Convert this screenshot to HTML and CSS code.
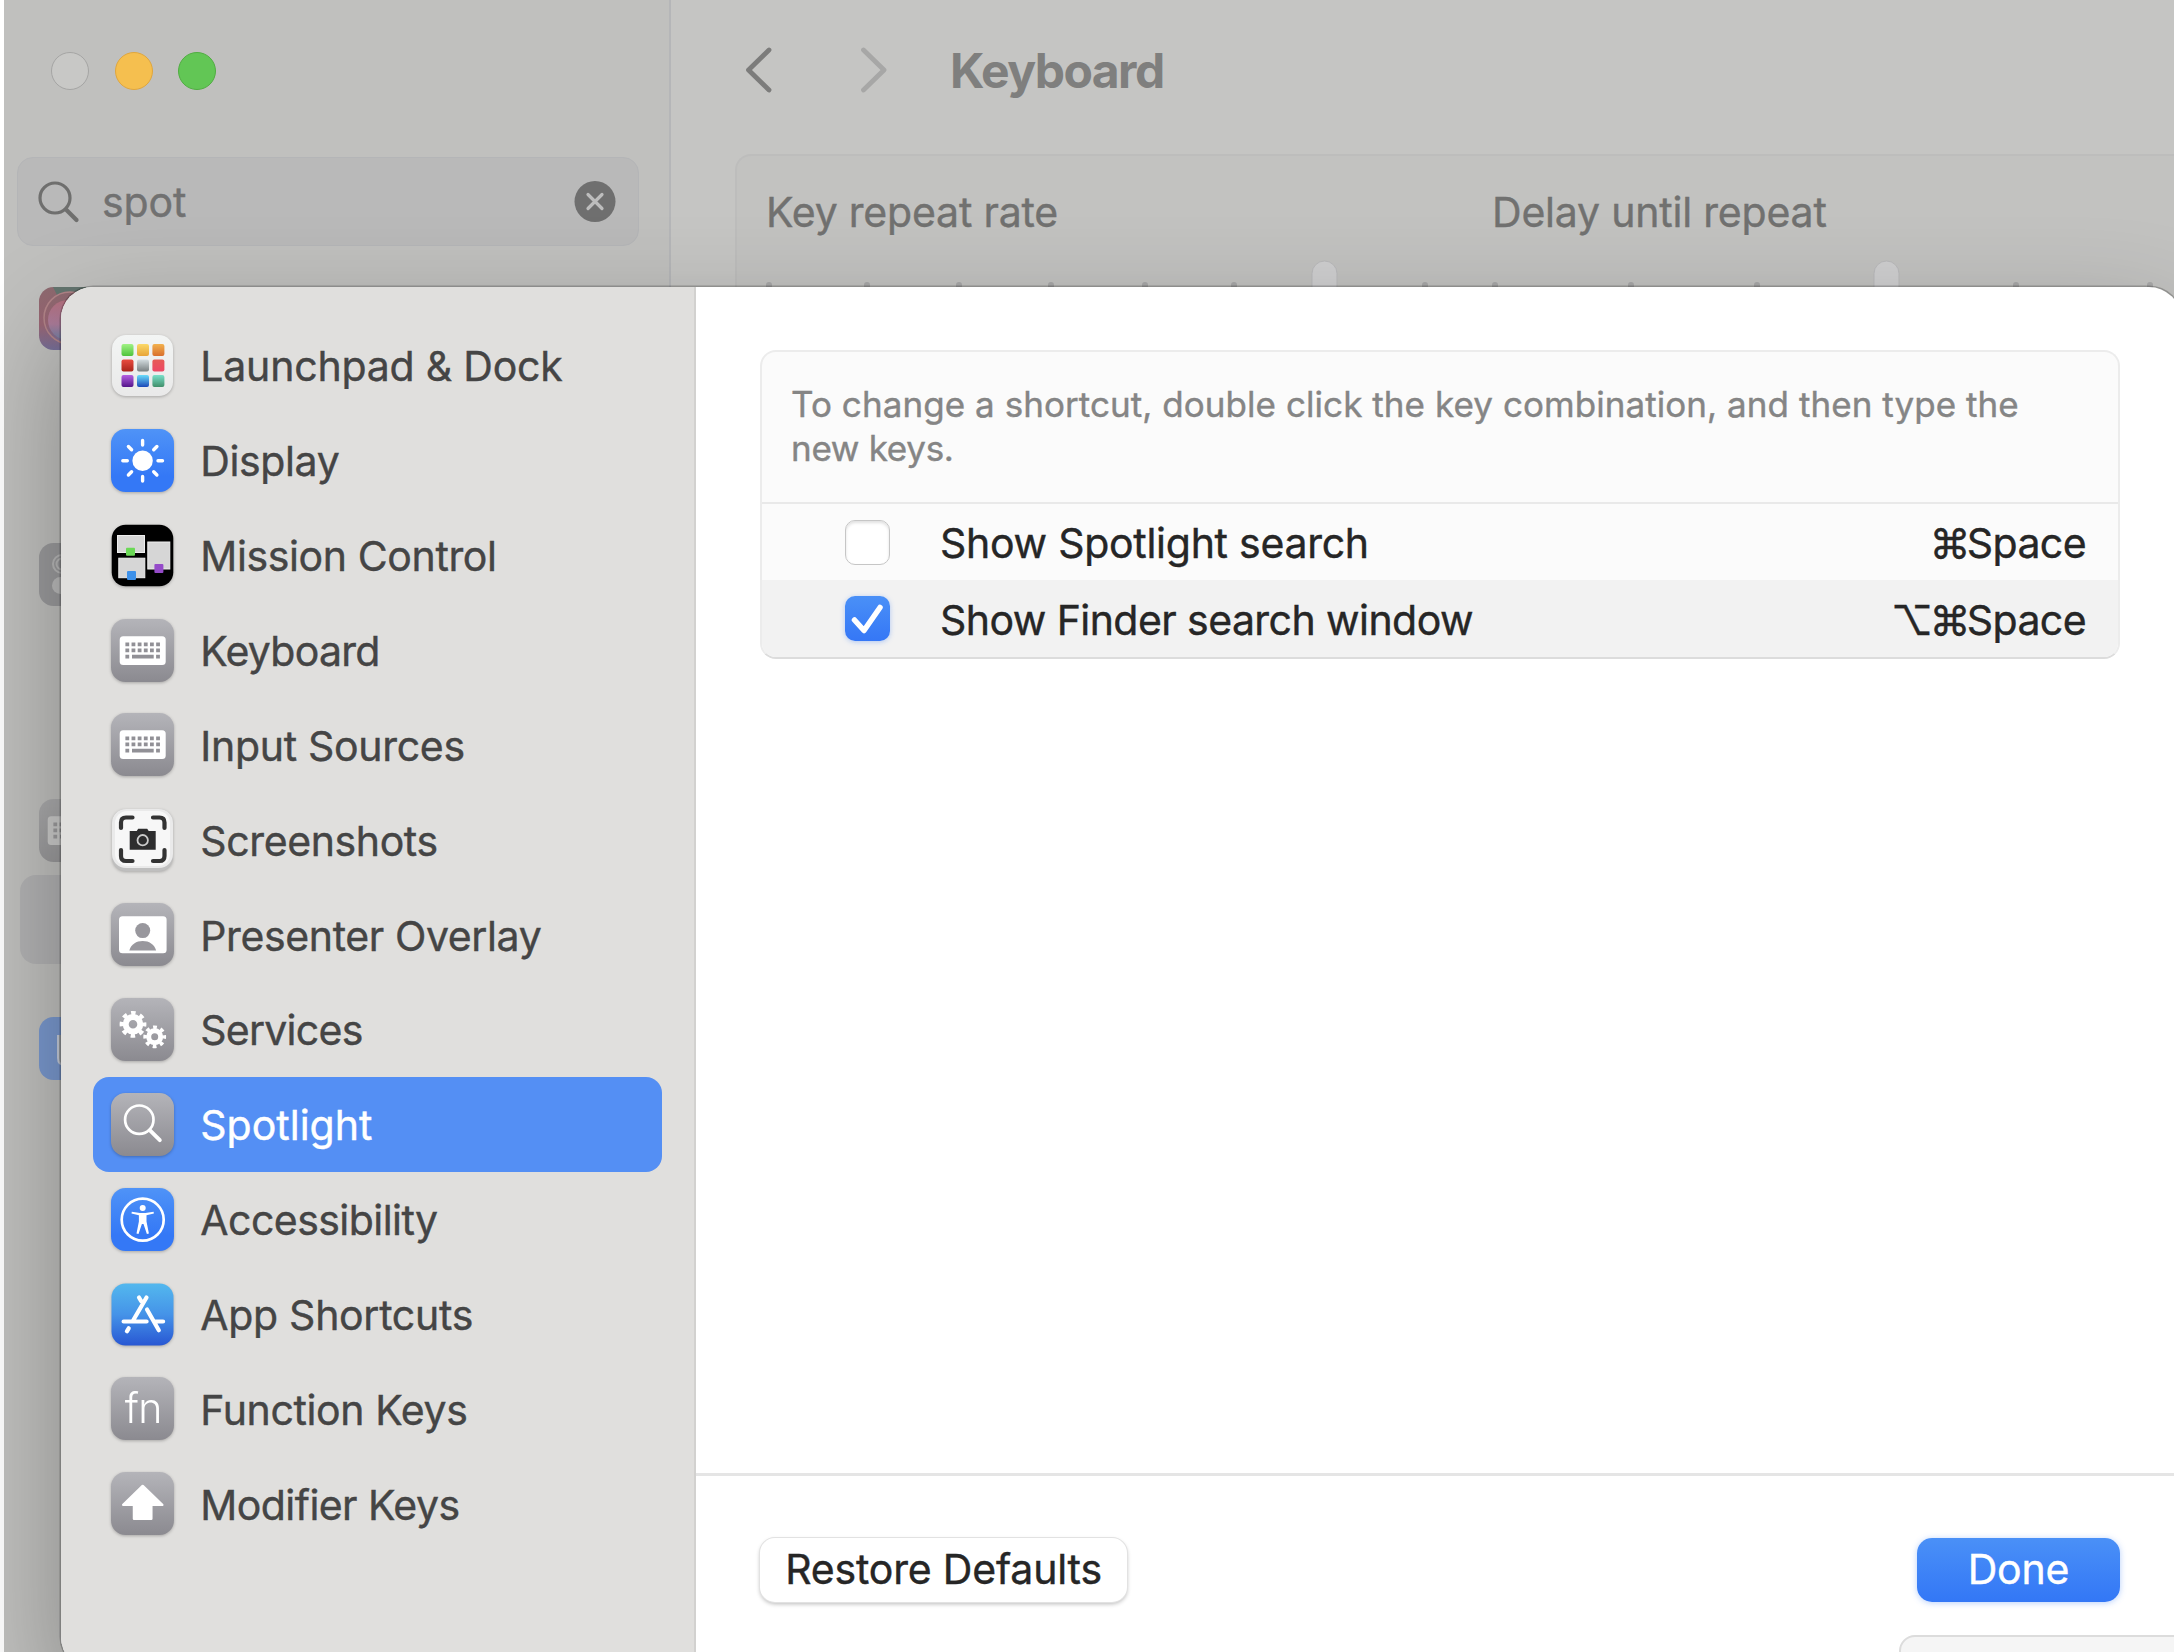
FILE: index.html
```html
<!DOCTYPE html>
<html lang="en">
<head>
<meta charset="utf-8">
<title>Keyboard Shortcuts</title>
<link rel="stylesheet" href="styles.css">
</head>
<body>
<svg class="defs" width="0" height="0" aria-hidden="true">
  <defs>
    <linearGradient id="gray" x1="0" y1="0" x2="0" y2="1"><stop offset="0" stop-color="#b4b4b9"/><stop offset="1" stop-color="#8b8a90"/></linearGradient>
    <linearGradient id="blue" x1="0" y1="0" x2="0" y2="1"><stop offset="0" stop-color="#4f93f7"/><stop offset=".75" stop-color="#3478f6"/></linearGradient>
    <linearGradient id="white" x1="0" y1="0" x2="0" y2="1"><stop offset="0" stop-color="#f3f5f4"/><stop offset="1" stop-color="#e9e9e9"/></linearGradient>
    <linearGradient id="store" x1="0" y1="0" x2="0" y2="1"><stop offset="0" stop-color="#53b8ee"/><stop offset=".5" stop-color="#4593e8"/><stop offset="1" stop-color="#2857d3"/></linearGradient>
    <linearGradient id="siri" x1="0" y1="0" x2="0" y2="1"><stop offset="0" stop-color="#8e6a70"/><stop offset=".6" stop-color="#9a6674"/><stop offset="1" stop-color="#77709a"/></linearGradient>
    <linearGradient id="orb" x1="0" y1="0" x2="0" y2="1"><stop offset="0" stop-color="#b4707f"/><stop offset=".6" stop-color="#ac7c9a"/><stop offset="1" stop-color="#7180a4"/></linearGradient>
    <linearGradient id="p1" x1="0" y1="0" x2="0" y2="1"><stop offset="0" stop-color="#a0f284"/><stop offset="1" stop-color="#4fc33c"/></linearGradient>
    <linearGradient id="p2" x1="0" y1="0" x2="0" y2="1"><stop offset="0" stop-color="#fbd968"/><stop offset="1" stop-color="#e8a437"/></linearGradient>
    <linearGradient id="p3" x1="0" y1="0" x2="0" y2="1"><stop offset="0" stop-color="#f2b14d"/><stop offset="1" stop-color="#d96f2d"/></linearGradient>
    <linearGradient id="p4" x1="0" y1="0" x2="0" y2="1"><stop offset="0" stop-color="#e94c40"/><stop offset="1" stop-color="#aa241b"/></linearGradient>
    <linearGradient id="p5" x1="0" y1="0" x2="0" y2="1"><stop offset="0" stop-color="#d3dcdf"/><stop offset="1" stop-color="#798081"/></linearGradient>
    <linearGradient id="p6" x1="0" y1="0" x2="0" y2="1"><stop offset="0" stop-color="#e65a55"/><stop offset="1" stop-color="#ed4765"/></linearGradient>
    <linearGradient id="p7" x1="0" y1="0" x2="0" y2="1"><stop offset="0" stop-color="#b560e2"/><stop offset="1" stop-color="#54158a"/></linearGradient>
    <linearGradient id="p8" x1="0" y1="0" x2="0" y2="1"><stop offset="0" stop-color="#69dcfa"/><stop offset="1" stop-color="#1c48b8"/></linearGradient>
    <linearGradient id="p9" x1="0" y1="0" x2="0" y2="1"><stop offset="0" stop-color="#79dfc9"/><stop offset="1" stop-color="#418f6a"/></linearGradient>
    <symbol id="kbd" viewBox="0 0 63 63">
      <rect width="63" height="63" rx="14.5" fill="url(#gray)"/>
      <rect x="8.7" y="17.3" width="46" height="28.6" rx="3.5" fill="#fff"/>
      <path d="M14.4 25.4h35M14.4 31.4h35" stroke="#919096" stroke-width="3.8" stroke-dasharray="3.8 2.35"/>
      <path d="M14.4 37.7h3.8M21 37.7h21.7M45.1 37.7h3.8" stroke="#919096" stroke-width="3.8"/>
    </symbol>
  </defs>
</svg>

<div class="window">
  <aside class="sidebar">
    <div class="lights"><i class="light off"></i><i class="light yellow"></i><i class="light green"></i></div>
    <div class="search">
      <svg width="42" height="42" viewBox="0 0 42 42" fill="none" stroke="#6f6f6e" stroke-linecap="round"><circle cx="17" cy="17" r="15" stroke-width="3.2"/><path d="M28 28.500L38.500 39" stroke-width="4.200"/></svg>
      <span class="query">spot</span>
      <svg width="42" height="42" viewBox="0 0 42 42"><circle cx="21" cy="20.500" r="20.500" fill="#6f6f6f"/><path d="M14 13.500l14 14M28 13.500L14 27.500" stroke="#bdbdbd" stroke-width="3.200" stroke-linecap="round"/></svg>
    </div>
    <div class="results">
      <svg class="r1" width="63" height="63" viewBox="0 0 63 63"><rect width="63" height="63" rx="14.500" fill="url(#siri)"/><path d="M14 0h49v30H30L18 8z" fill="#64756f"/><circle cx="31" cy="31" r="26" fill="url(#siri)" stroke="#b28488" stroke-width="1.500"/><circle cx="29" cy="33" r="20" fill="url(#orb)"/></svg>
      <svg class="r2" width="63" height="63" viewBox="0 0 63 63"><rect width="63" height="63" rx="14.500" fill="#9b9b9d"/><rect x="14" y="12" width="42" height="18" rx="9" fill="none" stroke="#b9b9b9" stroke-width="2"/><circle cx="23" cy="21" r="5.500" fill="none" stroke="#b9b9b9" stroke-width="2"/><rect x="13" y="34" width="44" height="17" rx="8.500" fill="#bcbcbc"/></svg>
      <svg class="r3" width="63" height="63"><use href="#kbd"/></svg>
      <div class="r4"></div>
      <svg class="r5" width="63" height="63" viewBox="0 0 63 63"><rect width="63" height="63" rx="14.500" fill="#7a99cf"/><path d="M19 18v23q0 7 7 7h20V18" fill="#a5aaaf" stroke="#c6cddb" stroke-width="2"/></svg>
    </div>
  </aside>
  <main class="content">
    <header class="toolbar">
      <svg width="28" height="48" viewBox="0 0 28 48" fill="none" stroke="#7c7c7b" stroke-width="4.800" stroke-linecap="round" stroke-linejoin="round"><path d="M25 4L4.500 24l20.500 20"/></svg>
      <svg width="28" height="48" viewBox="0 0 28 48" fill="none" stroke="#a7a7a6" stroke-width="4.800" stroke-linecap="round" stroke-linejoin="round"><path d="M4.500 4L25 24L4.500 44"/></svg>
      <h1>Keyboard</h1>
    </header>
    <section class="rates">
      <div class="rate first"><span>Key repeat rate</span>
        <svg width="670" height="28" viewBox="0 0 670 28"><path d="M3 25v6M101 25v6M193 25v6M285 25v6M379 25v6M468 25v6M659 25v6" stroke="#a8a8a8" stroke-width="6" stroke-linecap="round"/><rect x="546" y="1" width="25" height="60" rx="12.500" fill="#cfcfd0" stroke="#b9b9bb"/></svg>
      </div>
      <div class="rate"><span>Delay until repeat</span>
        <svg width="680" height="28" viewBox="0 0 680 28"><path d="M3 25v6M139 25v6M265 25v6M524 25v6M658 25v6" stroke="#a8a8a8" stroke-width="6" stroke-linecap="round"/><rect x="382" y="1" width="25" height="60" rx="12.500" fill="#cfcfd0" stroke="#b9b9bb"/></svg>
      </div>
    </section>
  </main>
</div>

<div class="sheet">
  <nav class="menu">
    <a class="item wide"><svg class="icon" viewBox="0 0 63 63"><rect x="1" y="1" width="61" height="61" rx="14" fill="url(#white)"/>
      <rect x="10.500" y="10" width="12" height="12" rx="2" fill="url(#p1)"/><rect x="26" y="10" width="12" height="12" rx="2" fill="url(#p2)"/><rect x="41.400" y="10" width="12" height="12" rx="2" fill="url(#p3)"/>
      <rect x="10.500" y="25.500" width="12" height="12" rx="2" fill="url(#p4)"/><rect x="26" y="25.500" width="12" height="12" rx="2" fill="url(#p5)"/><rect x="41.400" y="25.500" width="12" height="12" rx="2" fill="url(#p6)"/>
      <rect x="10.500" y="41" width="12" height="12" rx="2" fill="url(#p7)"/><rect x="26" y="41" width="12" height="12" rx="2" fill="url(#p8)"/><rect x="41.400" y="41" width="12" height="12" rx="2" fill="url(#p9)"/></svg><span>Launchpad &amp; Dock</span></a>
    <a class="item snug"><svg class="icon" viewBox="0 0 63 63"><rect width="63" height="63" rx="14.500" fill="url(#blue)"/><circle cx="31.600" cy="31.700" r="10.200" fill="#fff"/><path d="M31.600 11.500v4.500M31.600 47.500V52M11.800 31.700h4.500M47 31.700h4.500M17.400 17.500l3.200 3.200M42.700 42.800l3.200 3.200M45.900 17.500l-3.200 3.200M20.600 42.800L17.400 46" stroke="#fff" stroke-width="3.400" stroke-linecap="round"/></svg><span>Display</span></a>
    <a class="item snug"><svg class="icon" viewBox="0 0 63 63"><rect x=".700" y=".700" width="61.600" height="61.600" rx="14" fill="#000"/><g fill="#d6d6d6" stroke="#eee"><rect x="6.500" y="11.500" width="27" height="17"/><rect x="36.800" y="18" width="22" height="27"/><rect x="7.800" y="34.200" width="26" height="19.500"/></g><rect x="15" y="23.700" width="9" height="8" rx="1" fill="#6bd956"/><rect x="43.400" y="40" width="9" height="9" rx="1" fill="#954bc9"/><rect x="16" y="47" width="9" height="9" rx="1" fill="#3d91ea"/></svg><span>Mission Control</span></a>
    <a class="item tightest"><svg class="icon"><use href="#kbd"/></svg><span>Keyboard</span></a>
    <a class="item"><svg class="icon"><use href="#kbd"/></svg><span>Input Sources</span></a>
    <a class="item snug"><svg class="icon" viewBox="0 0 63 63"><rect x="1" y="1" width="61" height="62" rx="14" fill="#bfbfbf"/><rect x="1" y="1" width="61" height="59" rx="14" fill="#eaeaea"/><rect x="4" y="3" width="55" height="55" rx="12" fill="#f7f7f7"/><path d="M10 20v-5.500q0-5 5-5h6.500M42 9.500h6.500q5 0 5 5V20M53.500 42v6q0 5-5 5H42M21.500 53H15q-5 0-5-5v-6" fill="none" stroke="#333" stroke-width="4.200" stroke-linecap="round"/><path d="M18.700 23h7l1.500-2.300h9L37.700 23h7v18.700h-26z" fill="#2d2d2e"/><circle cx="31.700" cy="32.200" r="5.200" fill="#2d2d2e" stroke="#ccc" stroke-width="1.800"/></svg><span>Screenshots</span></a>
    <a class="item snug"><svg class="icon" viewBox="0 0 63 63"><rect width="63" height="63" rx="14.500" fill="url(#gray)"/><rect x="8" y="13.300" width="47.600" height="37" rx="3.500" fill="#fff"/><circle cx="31.700" cy="27.600" r="7.500" fill="#98979d"/><path d="M18.300 47.400c1.800-6 7-9.300 13.400-9.300s11.600 3.300 13.400 9.300z" fill="#98979d"/></svg><span>Presenter Overlay</span></a>
    <a class="item tightest"><svg class="icon" viewBox="0 0 63 63"><rect width="63" height="63" rx="14.500" fill="url(#gray)"/><g fill="none" stroke="#fff"><circle cx="22" cy="26.300" r="7.300" stroke-width="6"/><circle cx="22" cy="26.300" r="11.400" stroke-width="4" stroke-dasharray="4.500 4.453" stroke-dashoffset="2.250"/><circle cx="43.700" cy="38.800" r="6" stroke-width="5"/><circle cx="43.700" cy="38.800" r="9.600" stroke-width="3.600" stroke-dasharray="3.800 3.740" stroke-dashoffset="1.900"/></g></svg><span>Services</span></a>
    <a class="item wide selected"><svg class="icon" viewBox="0 0 63 63"><rect width="63" height="63" rx="14.500" fill="url(#gray)"/><circle cx="28.300" cy="26.700" r="14.200" fill="none" stroke="#fff" stroke-width="2.700"/><path d="M39 37.400l9.800 9.800" stroke="#fff" stroke-width="3.900" stroke-linecap="round"/></svg><span>Spotlight</span></a>
    <a class="item tight"><svg class="icon" viewBox="0 0 63 63"><rect width="63" height="63" rx="14.500" fill="url(#blue)"/><circle cx="31.700" cy="31.700" r="21" fill="none" stroke="#fff" stroke-width="2.700"/><circle cx="31.700" cy="20" r="3" fill="#fff"/><path d="M20.800 23.700L29 25h5.400l8.200-1.300.3 1.900-7.400 1.600v6.300l2.400 12-2 .4-3.400-10h-1.600l-3.400 10-2-.4 2.400-12v-6.300l-7.400-1.600z" fill="#fff"/></svg><span>Accessibility</span></a>
    <a class="item"><svg class="icon" viewBox="0 0 63 63"><rect x=".500" y=".500" width="62" height="62" rx="14" fill="url(#store)"/><path d="M35.500 14.500L21.800 38M28 14.500l2.200 3.700M36 26.500l11.800 20.700M12.600 38.500h23M44.500 38.500h7.600M17.700 45.300l-1.800 3" fill="none" stroke="#fff" stroke-width="4.200" stroke-linecap="round"/></svg><span>App Shortcuts</span></a>
    <a class="item snug"><svg class="icon" viewBox="0 0 63 63"><rect width="63" height="63" rx="14.500" fill="url(#gray)"/><text x="32.300" y="45.800" class="fn">fn</text></svg><span>Function Keys</span></a>
    <a class="item tight"><svg class="icon" viewBox="0 0 63 63"><rect width="63" height="63" rx="14.500" fill="url(#gray)"/><path d="M31.700 14L51.300 32.800H40.300V46.700H23V32.800H12.200z" fill="#fff" stroke="#fff" stroke-width="2.500" stroke-linejoin="round"/></svg><span>Modifier Keys</span></a>
  </nav>
  <section class="pane">
    <div class="group">
      <p class="help">To change a shortcut, double click the key combination, and then type the<br><span class="help2">new keys.</span></p>
      <div class="row"><i class="check"></i><span class="name n1">Show Spotlight search</span><span class="keys"><span class="mod">⌘</span>Space</span></div>
      <div class="row alt"><i class="check on"><svg width="45" height="45" viewBox="0 0 45 45"><path d="M9.500 24L19 34.500L35 11.500" fill="none" stroke="#fff" stroke-width="5.500" stroke-linecap="round" stroke-linejoin="round"/></svg></i><span class="name n2">Show Finder search window</span><span class="keys"><span class="mod">⌥⌘</span>Space</span></div>
    </div>
    <footer class="actions">
      <button class="btn restore">Restore Defaults</button>
      <button class="btn done">Done</button>
    </footer>
  </section>
</div>
<div class="corner"></div>
</body>
</html>
```

FILE: styles.css
```css
* { box-sizing: border-box; }
body {
  margin: 0;
  width: 2174px;
  height: 1652px;
  overflow: hidden;
  position: relative;
  background: #fff;
  font-family: Inter, "Liberation Sans", sans-serif;
  font-size: 41px;
  font-weight: 400;
  -webkit-text-stroke: .4px currentColor;
  color: #454545;
}
.defs { position: absolute; }
svg { display: block; flex: none; }

/* Dimmed parent window */
.window { display: flex; height: 100%; padding-left: 4px; }
.sidebar { width: 667px; background: #c0c0be; border-right: 2px solid #b5b6b8; padding: 52px 0 0 13px; }
.lights { display: flex; gap: 25.500px; padding-left: 34px; }
.light { width: 38px; height: 38px; border-radius: 50%; border: 1.500px solid; }
.off { background: #c8c8c6; border-color: #a5a5a4; }
.yellow { background: #f5bf4f; border-color: #e0a63d; }
.green { background: #62c655; border-color: #50ad41; }
.search {
  display: flex;
  align-items: center;
  width: 622px;
  height: 89px;
  margin-top: 67px;
  padding: 0 22px 0 20px;
  border-radius: 16px;
  border: 1.500px solid #b4b5b7;
  background: #b9b9b9;
  color: #717171;
}
.query { flex: 1; padding: 1px 0 0 22px; letter-spacing: -.1px; }
.results { display: flex; flex-direction: column; padding-left: 22px; }
.r1 { margin-top: 41px; }
.r2 { margin-top: 193px; }
.r3 { margin-top: 193px; opacity: .5; filter: brightness(.85); }
.r4 { margin: 13px 0 0 -19px; width: 600px; height: 89px; border-radius: 16px; background: #b2b2b3; }
.r5 { margin-top: 53px; }

.content { flex: 1; background: #c5c5c3; padding-top: 46px; }
.toolbar { display: flex; align-items: center; height: 48px; padding-left: 73px; }
.toolbar svg + svg { margin-left: 87px; }
.toolbar h1 { margin: 2px 0 0 63px; font-size: 48px; line-height: 48px; font-weight: 700; -webkit-text-stroke: 0; color: #7f7f7e; letter-spacing: -1.550px; }
.rates { display: flex; height: 300px; margin: 60px 0 0 64px; border: 2px solid #bdbdbc; border-right: 0; border-radius: 16px 0 0; background: #c2c2c0; color: #717170; }
.rate { flex: none; padding-top: 31px; }
.first { padding-left: 29px; width: 755px; }
.rate span { display: block; height: 50px; line-height: 50px; margin-bottom: 23px; white-space: nowrap; letter-spacing: -.2px; }

/* Shortcuts sheet */
.sheet {
  position: absolute;
  left: 61px;
  top: 287px;
  width: 2120px;
  height: 1382px;
  display: flex;
  border-radius: 32px;
  overflow: hidden;
  background: #fff;
  box-shadow: 0 0 0 1.500px rgba(0,0,0,.22), 0 44px 110px rgba(0,0,0,.3);
}
.menu { width: 635px; background: #e0dfdd; border-right: 2px solid #d2d1cf; padding: 31px 0 0 32px; }
.item { display: flex; align-items: center; width: 569px; height: 94.870px; padding-left: 18.300px; border-radius: 16px; white-space: nowrap; letter-spacing: -.3px; }
.item span { margin-left: 26px; padding-top: 2px; }
.wide { letter-spacing: -.2px; }
.snug { letter-spacing: -.38px; }
.tight { letter-spacing: -.55px; }
.tightest { letter-spacing: -.75px; }
.selected { letter-spacing: 0; }
.icon { width: 63px; height: 63px; filter: drop-shadow(0 1px 1.500px rgba(0,0,0,.25)); }
.fn { font: 300 41px Inter, sans-serif; fill: #fff; text-anchor: middle; letter-spacing: -.5px; }
.selected { background: #548ff4; color: #fff; }

.pane { flex: 1; display: flex; flex-direction: column; }
.group { width: 1360px; margin: 63px 0 0 64px; border: 2px solid #ececec; border-bottom-color: #dcdcdc; border-radius: 16px; background: #fbfbfb; overflow: hidden; }
.help { margin: 0; height: 152px; padding: 30px 0 0 29px; border-bottom: 2px solid #e9e9e9; font-size: 35px; line-height: 44px; white-space: nowrap; color: #858585; letter-spacing: .06px; }
.help2 { letter-spacing: -.3px; }
.row { display: flex; align-items: center; height: 76px; padding: 0 32px 0 83px; color: #262626; }
.alt { height: 77px; background: #f2f2f2; }
.check { width: 45px; height: 45px; border-radius: 10px; border: 1.500px solid #c6c6c6; background: #fff; box-shadow: inset 0 2px 3px rgba(0,0,0,.12); }
.on { border: 0; background: linear-gradient(#4a90f7, #3577f6); box-shadow: 0 1px 5px rgba(53,119,246,.35); }
.name { flex: 1; margin-left: 50px; padding-top: 2px; }
.n1 { letter-spacing: -.27px; }
.n2 { letter-spacing: -.56px; }
.keys { padding-top: 2px; letter-spacing: -.6px; }
.mod { letter-spacing: -3.600px; }
.actions { display: flex; justify-content: space-between; align-items: flex-start; height: 196px; margin-top: auto; padding: 62px 61px 0 64px; border-top: 3px solid #e5e5e5; }
.btn { height: 64px; border: 0; border-radius: 15px; padding: 0 0 3px; font: 400 41px Inter, sans-serif; letter-spacing: -.18px; -webkit-text-stroke: .4px currentColor; }
.restore { width: 367px; background: #fff; color: #262626; box-shadow: 0 0 0 1px #e2e2e2, 0 2px 4px rgba(0,0,0,.28); }
.done { width: 203px; background: linear-gradient(#4a90f7, #3377f6); color: #fff; box-shadow: 0 1px 6px rgba(53,119,246,.35); }
.corner { position: absolute; left: 1899px; top: 1635px; width: 300px; height: 60px; border: 2px solid #dcdcdc; border-radius: 16px; background: #f5f5f5; }
```
